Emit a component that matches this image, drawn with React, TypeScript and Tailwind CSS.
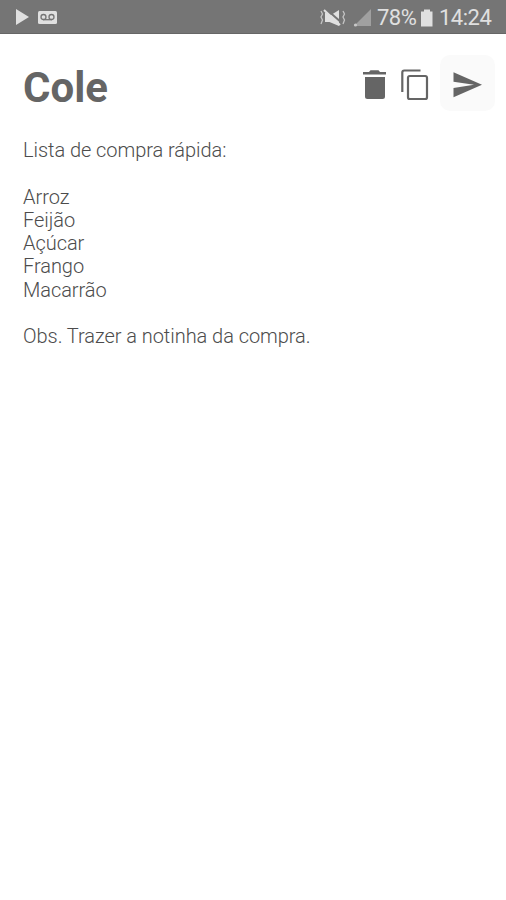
const lines = ["Lista de compra rápida:", "", "Arroz", "Feijão", "Açúcar", "Frango", "Macarrão", "", "Obs. Trazer a notinha da compra."];

export default function App() {
  return (
    <div className="h-[900px] w-[506px] overflow-hidden bg-white font-[Roboto,sans-serif]">
      <header className="flex h-[34px] items-center border-b border-[#666666] bg-[#757575] text-[#e0e0e0]">
        <svg width="64" height="34" viewBox="0 0 64 34" fill="currentColor">
          <path d="M16 9v16l13-8z" />
          <rect x="38" y="11" width="19" height="13" rx="1.5" />
          <g fill="none" stroke="#757575" strokeWidth="1.3"><circle cx="43.5" cy="17" r="2.5" /><circle cx="51.5" cy="17" r="2.5" /><path d="M43 19.7h9" /></g>
        </svg>
        <svg className="ml-[254px]" width="56" height="34" viewBox="318 0 56 34" fill="currentColor">
          <path d="M325 12.5v9.5h4.5L339 26V10l-8 5z" />
          <path d="M326 9l16 14" stroke="#757575" strokeWidth="2" /><path d="M324 10l16 15" stroke="currentColor" strokeWidth="2" />
          <path d="M321 11l1.5 3-1.5 3 1.5 3-1.5 4M343 11l1.5 3-1.5 3 1.5 3-1.5 4" fill="none" stroke="#c4c4c4" strokeWidth="1.3" />
          <path d="M371 9v17h-17z" fill="#a0a0a0" /><circle cx="355.5" cy="25" r="1.6" fill="#c8c8c8" />
        </svg>
        <span className="ml-[3px] mt-[2px] w-[40px] text-[22px] leading-none tracking-[-0.5px]">78%</span>
        <svg width="20" height="34" viewBox="417 0 20 34" fill="currentColor"><path d="M424 9.5h6v2h2.5v15h-11.5v-15h3z" /></svg>
        <span className="ml-[2px] mt-[2px] text-[22px] leading-none tracking-[-0.5px]">14:24</span>
      </header>
      <div className="flex h-[105px] items-center pl-[23px] pr-[11px] text-[#656565]">
        <h1 className="mt-[2px] flex-1 text-[42px] font-bold leading-none">Cole</h1>
        <div className="mb-[7px] flex items-center">
          <svg className="mt-[4px]" width="28" height="34" viewBox="360 68 28 34" fill="currentColor">
            <path d="M363 72h6l1.5-1.8h8L380 72h6v2.6h-23zM365 77h20v19.5a2.5 2.5 0 0 1-2.5 2.5h-15a2.5 2.5 0 0 1-2.5-2.5z" />
          </svg>
          <svg className="mr-[8px] ml-[10px] mt-[4px]" width="34" height="34" viewBox="398 68 34 34" fill="none" stroke="currentColor" strokeWidth="2.2">
            <path d="M402.3 92V72.5a2 2 0 0 1 2-2H420.5" /><rect x="408" y="76" width="19" height="23" rx="1.8" />
          </svg>
          <div className="h-[56px] w-[55px] rounded-[10px] bg-[#fafafa]">
            <svg width="55" height="56" viewBox="440 55 55 56" fill="currentColor"><path d="M453.5 72.3L482 84.8 453.5 97.3V88L474 84.8 453.5 81.8z" /></svg>
          </div>
        </div>
      </div>
      <main className="pl-[23px] text-[20px] font-light leading-[23.25px] tracking-[-0.05px] text-[#4c4c4c]">
        {lines.map((l, i) => <p key={i} className="h-[23.25px] whitespace-nowrap">{l}</p>)}
      </main>
    </div>
  );
}
